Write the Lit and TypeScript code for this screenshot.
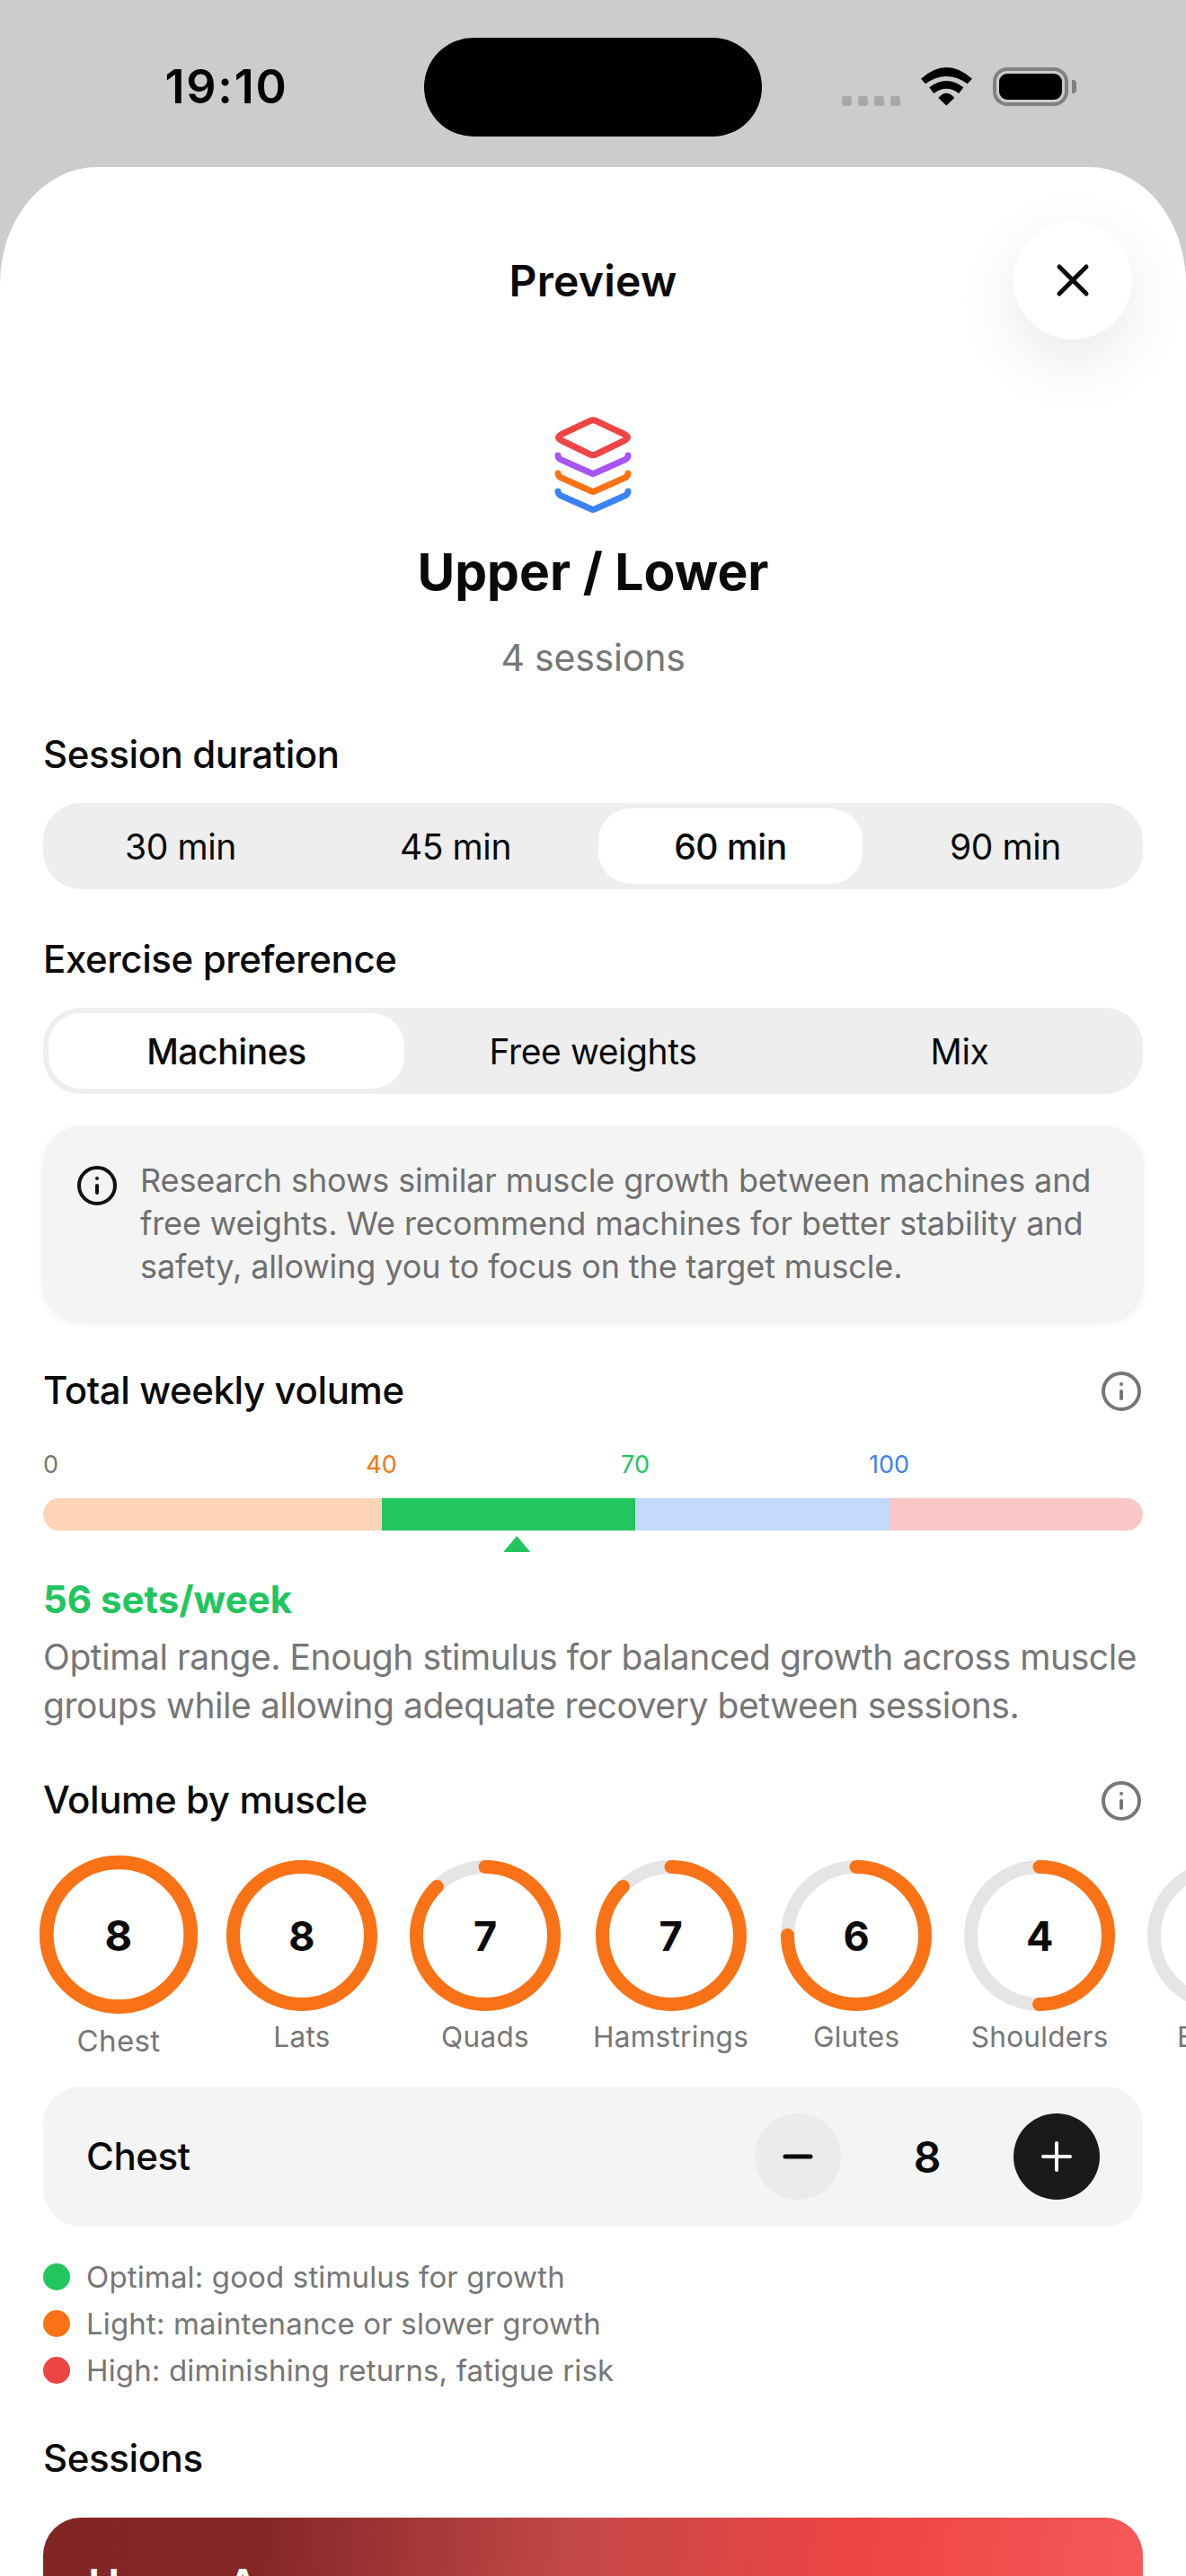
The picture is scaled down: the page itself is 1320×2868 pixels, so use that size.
import { LitElement, html, css, svg } from 'lit'
import { customElement } from 'lit/decorators.js'

const DURATIONS = [
	{ label: '30 min', on: false },
	{ label: '45 min', on: false },
	{ label: '60 min', on: true },
	{ label: '90 min', on: false },
]
const PREFERENCES = [
	{ label: 'Machines', on: true },
	{ label: 'Free weights', on: false },
	{ label: 'Mix', on: false },
]
const SCALE_MAX = 130
const TICKS = [
	{ at: 40, color: '#f97316' },
	{ at: 70, color: '#22c55e' },
	{ at: 100, color: '#3b82f6' },
]
const MUSCLES = [
	{ name: 'Chest', sets: 8, on: true },
	{ name: 'Lats', sets: 8, on: false },
	{ name: 'Quads', sets: 7, on: false },
	{ name: 'Hamstrings', sets: 7, on: false },
	{ name: 'Glutes', sets: 6, on: false },
	{ name: 'Shoulders', sets: 4, on: false },
	{ name: 'Biceps', sets: 3, on: false },
]
const LEGEND = [
	{ color: '#22c55e', text: 'Optimal: good stimulus for growth' },
	{ color: '#f97316', text: 'Light: maintenance or slower growth' },
	{ color: '#ef4444', text: 'High: diminishing returns, fatigue risk' },
]

const infoIcon = () => html`
	<svg viewBox="0 0 24 24" fill="none" stroke="currentColor" stroke-width="2" stroke-linecap="round" stroke-linejoin="round">
		<circle cx="12" cy="12" r="10"></circle>
		<path d="M12 16v-4"></path>
		<path d="M12 8h.01"></path>
	</svg>
`

const chevron = (y: number, color: string) => svg`
	<path d="M9 ${y}c0 3 3 5 6 6l31.500 14c1 .5 2 .5 3 0L81 ${y + 6}c3-1 6-3 6-6" stroke=${color}></path>
`

@customElement('app-root')
export class AppRoot extends LitElement {
	static styles = css`
		:host {
			display: block;
			height: 2868px;
			overflow: hidden;
			background: #cccccc;
			font-family: Inter, 'Noto Sans', sans-serif;
			color: #0a0a0a;
			-webkit-font-smoothing: antialiased;
		}

		.status {
			height: 186px;
			box-sizing: border-box;
			padding-top: 42px;
			display: flex;
			align-items: flex-start;
		}
		.time {
			width: 472px;
			box-sizing: border-box;
			padding: 26px 0 0 32px;
			text-align: center;
			font-size: 52px;
			line-height: 58px;
			font-weight: 600;
			letter-spacing: 1.8px;
			color: #000;
		}
		.island {
			width: 376px;
			height: 110px;
			border-radius: 55px;
			background: #000;
		}
		.indicators {
			margin: 33px 0 0 89px;
			height: 43px;
			display: flex;
			align-items: flex-end;
		}
		.signal {
			display: flex;
			gap: 7px;
		}
		.signal i {
			width: 11px;
			height: 11px;
			border-radius: 3px;
			background: #a8a8a8;
		}
		.wifi {
			width: 57px;
			height: 43px;
			margin-left: 23px;
		}
		.battery {
			width: 84px;
			height: 43px;
			margin-left: 23px;
			box-sizing: border-box;
			border: 4px solid #808080;
			border-radius: 16px;
			padding: 3px;
			position: relative;
		}
		.battery::before {
			content: '';
			display: block;
			height: 100%;
			border-radius: 9px;
			background: #000;
		}
		.battery::after {
			content: '';
			position: absolute;
			right: -13px;
			top: 10px;
			width: 5px;
			height: 15px;
			border-radius: 0 4px 4px 0;
			background: #808080;
		}

		.sheet {
			background: #fff;
			border-radius: 108px 108px 0 0 / 130px 130px 0 0;
			overflow: hidden;
			height: 2682px;
		}
		.top {
			display: grid;
			grid-template-columns: 1fr auto 1fr;
			align-items: center;
			padding: 60px 60px 0;
		}
		.top h1 {
			grid-column: 2;
			margin: 2px 0 0;
			font-size: 48px;
			line-height: 60px;
			font-weight: 600;
			letter-spacing: 0.3px;
		}
		.close {
			grid-column: 3;
			justify-self: end;
			width: 132px;
			height: 132px;
			border-radius: 50%;
			background: #fff;
			box-shadow: 0 24px 72px rgba(0, 0, 0, 0.09);
			display: flex;
			align-items: center;
			justify-content: center;
		}
		.close svg {
			width: 40px;
			height: 40px;
		}

		.content {
			padding: 0 48px;
		}
		.hero {
			display: flex;
			flex-direction: column;
			align-items: center;
			padding-top: 80px;
		}
		.stack {
			width: 96px;
			height: 120px;
			display: block;
		}
		.hero h2 {
			margin: 23px 0 0;
			font-size: 57px;
			line-height: 72px;
			font-weight: 700;
		}
		.count {
			margin-top: 32px;
			font-size: 41px;
			line-height: 54px;
			letter-spacing: -0.2px;
			color: #767676;
		}

		.label {
			font-size: 42px;
			line-height: 54px;
			font-weight: 500;
			letter-spacing: -0.4px;
		}
		.label.first {
			margin-top: 54px;
		}
		.label.next {
			margin-top: 51px;
		}
		.head {
			display: flex;
			justify-content: space-between;
			align-items: center;
			margin-top: 51px;
		}
		.head svg {
			width: 48px;
			height: 48px;
			color: #767676;
			margin-top: 2px;
		}

		.seg {
			display: flex;
			gap: 12px;
			margin-top: 27px;
			padding: 6px;
			height: 96px;
			box-sizing: border-box;
			border-radius: 42px;
			background: #eeeeee;
		}
		.seg div {
			flex: 1;
			display: flex;
			align-items: center;
			justify-content: center;
			border-radius: 36px;
			font-size: 39px;
			font-weight: 400;
			letter-spacing: -0.4px;
		}
		.seg .on {
			background: #fff;
			font-weight: 500;
		}

		.note {
			display: flex;
			gap: 24px;
			margin-top: 36px;
			padding: 36px;
			border-radius: 42px;
			background: #f4f4f4;
			box-shadow: 0 3px 9px rgba(0, 0, 0, 0.08);
			font-size: 36px;
			line-height: 48px;
			letter-spacing: -0.12px;
			color: #6f6f6f;
		}
		.note svg {
			flex: none;
			width: 48px;
			height: 48px;
			margin-top: 6px;
			color: #111;
		}

		.ticks {
			position: relative;
			height: 33px;
			margin-top: 39px;
			font-size: 27px;
			line-height: 33px;
			color: #767676;
		}
		.ticks span {
			position: absolute;
			top: 0;
			transform: translateX(-50%);
		}
		.ticks .zero {
			transform: none;
		}
		.bar {
			display: flex;
			height: 36px;
			margin-top: 21px;
			border-radius: 18px;
			overflow: hidden;
		}
		.marker {
			width: 30px;
			height: 18px;
			margin-top: 6px;
			background: #22c55e;
			clip-path: polygon(50% 0, 100% 100%, 0 100%);
		}
		.verdict {
			margin-top: 26px;
			font-size: 42px;
			line-height: 54px;
			font-weight: 700;
			color: #22c55e;
		}
		.why {
			margin-top: 10px;
			font-size: 39px;
			line-height: 54px;
			letter-spacing: -0.42px;
			color: #767676;
		}

		.rings {
			display: flex;
			gap: 36px;
			margin-top: 40px;
			width: max-content;
		}
		.muscle {
			min-width: 168px;
			display: flex;
			flex-direction: column;
			align-items: center;
			gap: 8px;
		}
		.muscle.on {
			transform: scale(1.05);
		}
		.ring {
			position: relative;
			width: 168px;
			height: 168px;
		}
		.ring svg {
			display: block;
			width: 168px;
			height: 168px;
			transform: rotate(-90deg);
		}
		.ring b {
			position: absolute;
			inset: 0;
			display: flex;
			align-items: center;
			justify-content: center;
			font-size: 45px;
			font-weight: 700;
		}
		.muscle span {
			font-size: 31.5px;
			line-height: 42px;
			letter-spacing: 0.3px;
			color: #767676;
		}

		.editor {
			display: flex;
			align-items: center;
			height: 156px;
			box-sizing: border-box;
			margin-top: 34px;
			padding: 0 48px;
			border-radius: 42px;
			background: #f4f4f4;
		}
		.editor .name {
			flex: 1;
		}
		.step {
			width: 96px;
			height: 96px;
			border-radius: 50%;
			display: flex;
			align-items: center;
			justify-content: center;
			background: #ebebeb;
			color: #0a0a0a;
		}
		.step.plus {
			background: #1a1a1a;
			color: #fff;
		}
		.step svg {
			width: 36px;
			height: 36px;
		}
		.editor b {
			width: 192px;
			text-align: center;
			font-size: 48px;
			font-weight: 600;
		}

		.legend {
			display: flex;
			flex-direction: column;
			gap: 12px;
			margin-top: 36px;
		}
		.legend div {
			display: flex;
			align-items: center;
			gap: 18px;
			font-size: 33px;
			line-height: 40px;
			letter-spacing: 0.15px;
			color: #767676;
		}
		.legend i {
			width: 30px;
			height: 30px;
			border-radius: 50%;
		}

		.session {
			margin-top: 39px;
			height: 300px;
			box-sizing: border-box;
			padding: 45px 50px;
			border-radius: 42px;
			background: linear-gradient(97deg, #822525 0%, #842626 19%, #c44848 47%, #ef4444 73%, #f45b5b 100%);
			color: #fff;
			font-size: 48px;
			line-height: 60px;
			font-weight: 600;
		}
	`

	private ring(sets: number) {
		const r = 76.5
		const len = 2 * Math.PI * r
		return html`
			<div class="ring">
				<svg viewBox="0 0 168 168" fill="none" stroke-width="15">
					<circle cx="84" cy="84" r=${r} stroke="#e5e5e5"></circle>
					<circle cx="84" cy="84" r=${r} stroke="#f97316" stroke-linecap="round" stroke-dasharray="${(len * sets) / 8} ${len}"></circle>
				</svg>
				<b>${sets}</b>
			</div>
		`
	}

	render() {
		const pct = (v: number) => `${(v / SCALE_MAX) * 100}%`
		return html`
			<div class="status">
				<div class="time">19:10</div>
				<div class="island"></div>
				<div class="indicators">
					<div class="signal"><i></i><i></i><i></i><i></i></div>
					<svg class="wifi" viewBox="0 0 57 43">
						<path d="M0 12.700Q28.500-12.700 57 12.700L51.700 18.300Q28.500 1.700 5 18.300Z"></path>
						<path d="M9.300 22.300Q28.500 7.700 47.300 22.300L42.300 29Q28.500 18.400 14.300 29Z"></path>
						<path d="M19.300 34Q28.500 23.400 37.300 34L28.300 42.500Z"></path>
					</svg>
					<div class="battery"></div>
				</div>
			</div>

			<div class="sheet">
				<div class="top">
					<h1>Preview</h1>
					<div class="close">
						<svg viewBox="0 0 40 40" fill="none" stroke="#0a0a0a" stroke-width="5" stroke-linecap="round">
							<path d="M5 5l30 30M35 5L5 35"></path>
						</svg>
					</div>
				</div>

				<div class="content">
					<div class="hero">
						<svg class="stack" viewBox="0 0 96 120" fill="none" stroke-width="7" stroke-linecap="round" stroke-linejoin="round">
							<path d="M45 10.500 L14 25c-6 3-6 5 0 8l31 15c2 1 4 1 6 0l31-15c6-3 6-5 0-8L51 10.500c-2-1-4-1-6 0Z" stroke="#ef4444"></path>
							${chevron(49, '#a855f7')}
							${chevron(69, '#f97316')}
							${chevron(89, '#3b82f6')}
						</svg>
						<h2>Upper / Lower</h2>
						<div class="count">4 sessions</div>
					</div>

					<div class="label first">Session duration</div>
					<div class="seg">
						${DURATIONS.map((d) => html`<div class=${d.on ? 'on' : ''}>${d.label}</div>`)}
					</div>

					<div class="label next">Exercise preference</div>
					<div class="seg">
						${PREFERENCES.map((p) => html`<div class=${p.on ? 'on' : ''}>${p.label}</div>`)}
					</div>

					<div class="note">
						${infoIcon()}
						<div>Research shows similar muscle growth between machines and free weights. We recommend machines for better stability and safety, allowing you to focus on the target muscle.</div>
					</div>

					<div class="head">
						<div class="label">Total weekly volume</div>
						${infoIcon()}
					</div>
					<div class="ticks">
						<span class="zero" style="left:0">0</span>
						${TICKS.map((t) => html`<span style="left:${pct(t.at)};color:${t.color}">${t.at}</span>`)}
					</div>
					<div class="bar">
						<div style="width:${pct(40)};background:#fed4b9"></div>
						<div style="width:${pct(30)};background:#22c55e"></div>
						<div style="width:${pct(30)};background:#c4d9fd"></div>
						<div style="width:${pct(30)};background:#fac7c7"></div>
					</div>
					<div class="marker" style="margin-left:calc(${pct(56)} - 15px)"></div>
					<div class="verdict">56 sets/week</div>
					<div class="why">Optimal range. Enough stimulus for balanced growth across muscle groups while allowing adequate recovery between sessions.</div>

					<div class="head">
						<div class="label">Volume by muscle</div>
						${infoIcon()}
					</div>
					<div class="rings">
						${MUSCLES.map(
							(m) => html`
								<div class="muscle ${m.on ? 'on' : ''}">
									${this.ring(m.sets)}
									<span>${m.name}</span>
								</div>
							`,
						)}
					</div>

					<div class="editor">
						<div class="label name">Chest</div>
						<div class="step">
							<svg viewBox="0 0 36 36" fill="none" stroke="currentColor" stroke-width="5" stroke-linecap="round"><path d="M4 18h28"></path></svg>
						</div>
						<b>8</b>
						<div class="step plus">
							<svg viewBox="0 0 36 36" fill="none" stroke="currentColor" stroke-width="4" stroke-linecap="round"><path d="M3 18h30M18 3v30"></path></svg>
						</div>
					</div>

					<div class="legend">
						${LEGEND.map((l) => html`<div><i style="background:${l.color}"></i>${l.text}</div>`)}
					</div>

					<div class="label next">Sessions</div>
					<div class="session">Upper A</div>
				</div>
			</div>
		`
	}
}
